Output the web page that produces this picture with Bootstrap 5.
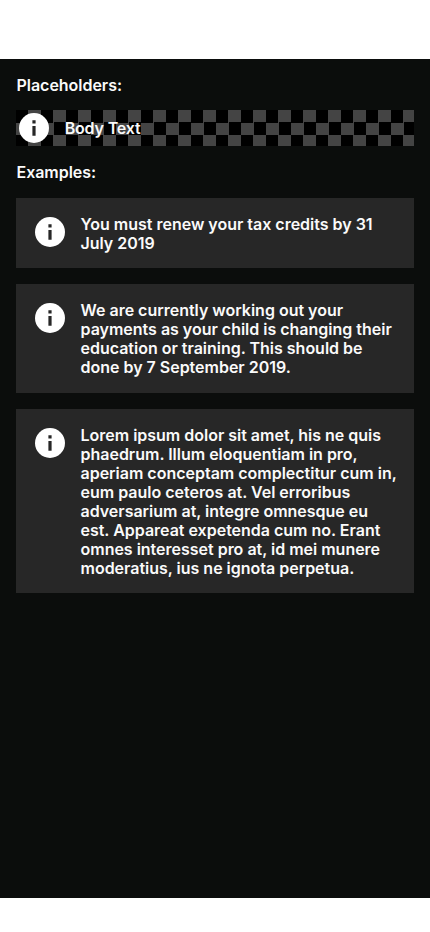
<!DOCTYPE html>
<html lang="en">
<head>
<meta charset="utf-8">
<meta name="viewport" content="width=device-width, initial-scale=1">
<title>Information messages</title>
<link href="https://cdn.jsdelivr.net/npm/bootstrap@5.3.0/dist/css/bootstrap.min.css" rel="stylesheet">
<style>
body{background:#fff;font-family:Inter,"Liberation Sans",sans-serif;font-size:16px;font-weight:600;line-height:19.1px;padding-top:59px}
.screen{height:839px;background:#0b0d0c;color:#fafafa;padding-top:16.5px}
.title{font-size:16px;font-weight:600;line-height:19px;padding-left:.5px;letter-spacing:-.03px}
.checker{height:36.5px;padding-left:3px;margin-top:15px;margin-bottom:16.6px;background:repeating-conic-gradient(#444 0 25%,#000 0 50%) 0 0/25px 25px}
.info-icon{width:30px;height:30px}
.message{background:#272727;padding:17px 16px 15.2px 19px}
.message .info-icon{margin-top:2.3px}
.message p{margin-left:15.5px;letter-spacing:-.01px}
.body-label{margin-left:15.7px;padding-top:1px;letter-spacing:-.18px}
</style>
<script src="https://cdn.jsdelivr.net/npm/bootstrap@5.3.0/dist/js/bootstrap.bundle.min.js"></script>
</head>
<body>
<svg class="d-none"><symbol id="info" viewBox="0 0 30 30"><circle cx="15" cy="15" r="15" fill="#fff"/><path d="M13.4 7.3h3.2v3.2h-3.2zM13.4 13h3.2v9.8h-3.2z" fill="#272727"/></symbol></svg>
<main class="screen px-3">
<h2 class="title mb-0">Placeholders:</h2>
<div class="checker d-flex align-items-center"><svg class="info-icon flex-shrink-0"><use href="#info"/></svg><span class="body-label">Body Text</span></div>
<h2 class="title mb-0">Examples:</h2>
<div class="d-flex flex-column gap-3 pt-3">
<div class="message d-flex align-items-start"><svg class="info-icon flex-shrink-0"><use href="#info"/></svg><p class="mb-0 text-nowrap">You must renew your tax credits by 31<br>July 2019</p></div>
<div class="message d-flex align-items-start"><svg class="info-icon flex-shrink-0"><use href="#info"/></svg><p class="mb-0 text-nowrap">We are currently working out your<br>payments as your child is changing their<br>education or training. This should be<br>done by 7 September 2019.</p></div>
<div class="message d-flex align-items-start"><svg class="info-icon flex-shrink-0"><use href="#info"/></svg><p class="mb-0 text-nowrap">Lorem ipsum dolor sit amet, his ne quis<br>phaedrum. Illum eloquentiam in pro,<br>aperiam conceptam complectitur cum in,<br>eum paulo ceteros at. Vel erroribus<br>adversarium at, integre omnesque eu<br>est. Appareat expetenda cum no. Erant<br>omnes interesset pro at, id mei munere<br>moderatius, ius ne ignota perpetua.</p></div>
</div>
</main>
</body>
</html>
